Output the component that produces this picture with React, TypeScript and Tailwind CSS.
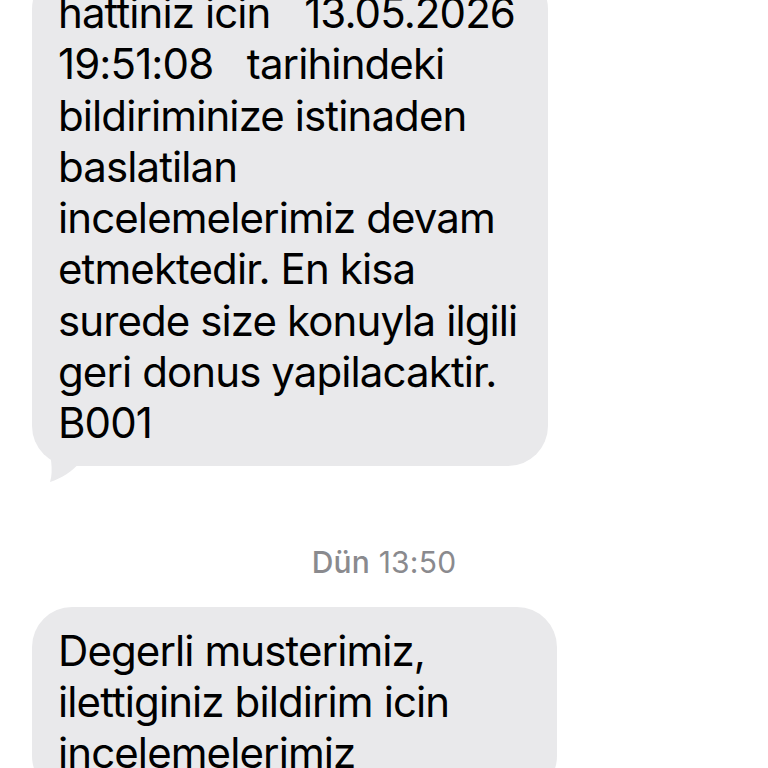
import React from "react";

const first = [
  "hattiniz icin  13.05.2026",
  "19:51:08  tarihindeki",
  "bildiriminize istinaden",
  "baslatilan",
  "incelemelerimiz devam",
  "etmektedir. En kisa",
  "surede size konuyla ilgili",
  "geri donus yapilacaktir.",
  "B001",
];

const second = ["Degerli musterimiz,", "ilettiginiz bildirim icin", "incelemelerimiz"];

// double spaces in the SMS render a bit wider than two normal spaces
const Line: React.FC<{ text: string }> = ({ text }) => {
  const parts = text.split("  ");
  return (
    <div className="whitespace-pre">
      {parts.map((p, i) => (
        <React.Fragment key={i}>
          {i > 0 && <span className="tracking-[5px]">{"  "}</span>}
          {p}
        </React.Fragment>
      ))}
    </div>
  );
};

const Bubble: React.FC<{ lines: string[]; width: string; tail?: boolean; className?: string }> = ({
  lines,
  width,
  tail,
  className = "",
}) => (
  <div className={`relative ml-[32px] ${width} ${className}`}>
    <div className="relative z-10 rounded-[40px] bg-[#e9e9eb] pl-[26px] pr-[20px] pt-[18px] pb-[17px] text-[42px] leading-[51.3px] tracking-[-0.9px] text-black">
      {lines.map((l, i) => (
        <Line key={i} text={l} />
      ))}
    </div>
    {tail && (
      <svg className="absolute left-[4px] bottom-[-16px] z-0" width="46" height="44" viewBox="0 0 46 44">
        <path d="M12 0 C 14 18, 18 32, 14 44 C 26 40, 36 34, 46 22 L 46 0 Z" fill="#e9e9eb" />
      </svg>
    )}
  </div>
);

export default function App() {
  return (
    <div
      className="w-[768px] h-[768px] overflow-hidden bg-white"
      style={{ fontFamily: "Inter, 'Noto Sans', sans-serif" }}
    >
      <Bubble lines={first} width="w-[516px]" tail className="-mt-[31px]" />
      <div className="mt-[78px] text-center text-[30px] leading-[36px] tracking-[0.2px] text-[#8a8a8e]">
        <span className="font-medium">Dün</span> 13:50
      </div>
      <Bubble lines={second} width="w-[525px]" className="mt-[27px]" />
    </div>
  );
}
